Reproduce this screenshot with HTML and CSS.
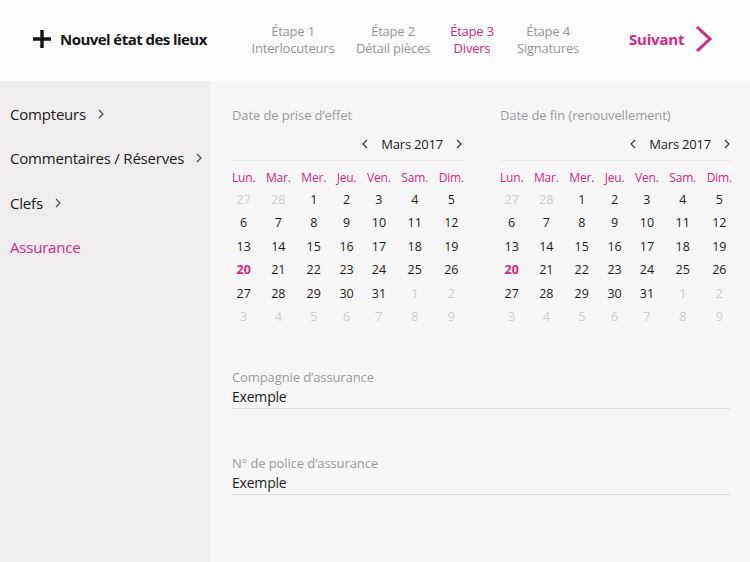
FILE: index.html
```html
<!DOCTYPE html>
<html lang="fr">
<head>
<meta charset="utf-8">
<title>Nouvel état des lieux</title>
<link rel="stylesheet" href="styles.css">
</head>
<body>
<header class="topbar">
  <div class="brand">
    <svg class="plus" width="18" height="18" viewBox="0 0 18 18"><path d="M9 0v18M0 9h18" stroke="#111" stroke-width="3.4"/></svg>
    <span class="brand-title">Nouvel état des lieux</span>
  </div>
  <nav class="steps">
    <div class="step s1">Étape 1<br>Interlocuteurs</div>
    <div class="step s2">Étape 2<br>Détail pièces</div>
    <div class="step s3 active">Étape 3<br>Divers</div>
    <div class="step s4">Étape 4<br>Signatures</div>
  </nav>
  <div class="next">
    <span class="next-label">Suivant</span>
    <svg class="next-chev" width="18" height="28" viewBox="0 0 18 28"><path d="M2 2l13 12L2 26" fill="none" stroke="#d4277f" stroke-width="3"/></svg>
  </div>
</header>
<div class="body">
  <aside class="sidebar">
    <div class="side-item"><span>Compteurs</span><svg class="side-chev" width="6" height="10" viewBox="0 0 6 10"><path d="M1 1l4 4-4 4" fill="none" stroke="#444" stroke-width="1.1"/></svg></div>
    <div class="side-item"><span>Commentaires / Réserves</span><svg class="side-chev" width="6" height="10" viewBox="0 0 6 10"><path d="M1 1l4 4-4 4" fill="none" stroke="#444" stroke-width="1.1"/></svg></div>
    <div class="side-item"><span>Clefs</span><svg class="side-chev" width="6" height="10" viewBox="0 0 6 10"><path d="M1 1l4 4-4 4" fill="none" stroke="#444" stroke-width="1.1"/></svg></div>
    <div class="side-item active"><span>Assurance</span></div>
  </aside>
  <main class="main">
    <div class="cals">
      <section class="cal-block">
        <div class="field-label">Date de prise d’effet</div>
        <div class="cal-nav">
          <svg width="6" height="10" viewBox="0 0 6 10"><path d="M5 1L1 5l4 4" fill="none" stroke="#333" stroke-width="1.1"/></svg>
          <span class="cal-month">Mars 2017</span>
          <svg width="6" height="10" viewBox="0 0 6 10"><path d="M1 1l4 4-4 4" fill="none" stroke="#333" stroke-width="1.1"/></svg>
        </div>
        <div class="cal-grid">
          <div class="col"><b>Lun.</b><i class="o">27</i><i>6</i><i>13</i><i class="today">20</i><i>27</i><i class="o">3</i></div>
          <div class="col"><b>Mar.</b><i class="o">28</i><i>7</i><i>14</i><i>21</i><i>28</i><i class="o">4</i></div>
          <div class="col"><b>Mer.</b><i>1</i><i>8</i><i>15</i><i>22</i><i>29</i><i class="o">5</i></div>
          <div class="col"><b>Jeu.</b><i>2</i><i>9</i><i>16</i><i>23</i><i>30</i><i class="o">6</i></div>
          <div class="col"><b>Ven.</b><i>3</i><i>10</i><i>17</i><i>24</i><i>31</i><i class="o">7</i></div>
          <div class="col"><b>Sam.</b><i>4</i><i>11</i><i>18</i><i>25</i><i class="o">1</i><i class="o">8</i></div>
          <div class="col"><b>Dim.</b><i>5</i><i>12</i><i>19</i><i>26</i><i class="o">2</i><i class="o">9</i></div>
        </div>
      </section>
      <section class="cal-block">
        <div class="field-label">Date de fin (renouvellement)</div>
        <div class="cal-nav">
          <svg width="6" height="10" viewBox="0 0 6 10"><path d="M5 1L1 5l4 4" fill="none" stroke="#333" stroke-width="1.1"/></svg>
          <span class="cal-month">Mars 2017</span>
          <svg width="6" height="10" viewBox="0 0 6 10"><path d="M1 1l4 4-4 4" fill="none" stroke="#333" stroke-width="1.1"/></svg>
        </div>
        <div class="cal-grid">
          <div class="col"><b>Lun.</b><i class="o">27</i><i>6</i><i>13</i><i class="today">20</i><i>27</i><i class="o">3</i></div>
          <div class="col"><b>Mar.</b><i class="o">28</i><i>7</i><i>14</i><i>21</i><i>28</i><i class="o">4</i></div>
          <div class="col"><b>Mer.</b><i>1</i><i>8</i><i>15</i><i>22</i><i>29</i><i class="o">5</i></div>
          <div class="col"><b>Jeu.</b><i>2</i><i>9</i><i>16</i><i>23</i><i>30</i><i class="o">6</i></div>
          <div class="col"><b>Ven.</b><i>3</i><i>10</i><i>17</i><i>24</i><i>31</i><i class="o">7</i></div>
          <div class="col"><b>Sam.</b><i>4</i><i>11</i><i>18</i><i>25</i><i class="o">1</i><i class="o">8</i></div>
          <div class="col"><b>Dim.</b><i>5</i><i>12</i><i>19</i><i>26</i><i class="o">2</i><i class="o">9</i></div>
        </div>
      </section>
    </div>
    <div class="field">
      <div class="field-label">Compagnie d’assurance</div>
      <div class="field-value">Exemple</div>
    </div>
    <div class="field">
      <div class="field-label">N° de police d’assurance</div>
      <div class="field-value">Exemple</div>
    </div>
  </main>
</div>
</body>
</html>
```
FILE: styles.css
```css
* { box-sizing: border-box; }
html, body { margin: 0; padding: 0; }
body {
  width: 750px;
  height: 562px;
  overflow: hidden;
  font-family: "Open Sans", "Noto Sans", sans-serif;
  color: #1d1d1d;
  background: #f7f7f7;
}
.topbar {
  height: 81px;
  background: #fdfdfd;
  display: flex;
  align-items: center;
  padding-bottom: 3px;
}
.brand {
  display: flex;
  align-items: center;
  margin-left: 33px;
  width: 210px;
}
.plus { flex: none; }
.brand-title {
  margin-left: 9px;
  font-weight: 700;
  font-size: 15px;
  letter-spacing: -0.55px;
  color: #151515;
}
.steps {
  display: grid;
  grid-template-columns: 100px 100px 58px 94px;
  padding-top: 1px;
}
.step {
  text-align: center;
  font-size: 13px;
  line-height: 17px;
  color: #959595;
  letter-spacing: -0.2px;
}
.step.active { color: #d4277f; }
.next {
  display: flex;
  align-items: center;
  margin-left: 34px;
}
.next-label {
  color: #d4277f;
  font-weight: 700;
  font-size: 15px;
  letter-spacing: -0.2px;
}
.next-chev { margin-left: 11px; }
.body {
  display: flex;
  height: 481px;
}
.sidebar {
  width: 210px;
  flex: none;
  background: #efedee;
  padding-top: 11px;
}
.side-item {
  height: 44.3px;
  display: flex;
  align-items: center;
  padding-left: 10px;
  font-size: 15px;
  color: #1b1b1b;
  letter-spacing: -0.2px;
}
.side-item .side-chev { margin-left: 12px; }
.side-item.active { color: #d4277f; }
.main {
  flex: 1;
  min-width: 0;
  padding: 25px 20px 0 22px;
}
.cals {
  display: flex;
}
.cal-block {
  width: 268px;
  flex: none;
}
.cal-block + .cal-block { flex: 1; width: auto; }
.field-label {
  font-size: 13px;
  line-height: 18px;
  color: #9a9a9a;
  letter-spacing: -0.1px;
}
.cal-nav {
  width: 232px;
  display: flex;
  justify-content: flex-end;
  align-items: flex-start;
  height: 29px;
  margin-top: 8px;
  padding-right: 2px;
  border-bottom: 1px solid #ebebeb;
}
.cal-nav svg { margin-top: 7px; }
.cal-month {
  font-size: 13px;
  line-height: 24px;
  color: #1b1b1b;
  margin: 0 13px 0 13px;
  letter-spacing: -0.2px;
}
.cal-grid {
  width: 232px;
  display: flex;
  justify-content: space-between;
  padding-top: 8px;
}
.col {
  display: flex;
  flex-direction: column;
  align-items: center;
}
.col b {
  font-weight: 400;
  font-size: 12px;
  line-height: 18px;
  color: #d4277f;
  letter-spacing: -0.2px;
  margin-bottom: 1px;
}
.col i {
  font-style: normal;
  font-size: 12.5px;
  line-height: 23.4px;
  color: #1b1b1b;
}
.col i.o { color: #cdcdcd; }
.col i.today { color: #d4277f; font-weight: 700; }
.field {
  margin-top: 40px;
  border-bottom: 1.5px solid #dedede;
  padding-bottom: 1px;
}
.field + .field { margin-top: 45px; }
.field-value {
  margin-top: 1px;
  font-size: 14px;
  line-height: 20px;
  color: #1b1b1b;
  letter-spacing: -0.2px;
}
```
